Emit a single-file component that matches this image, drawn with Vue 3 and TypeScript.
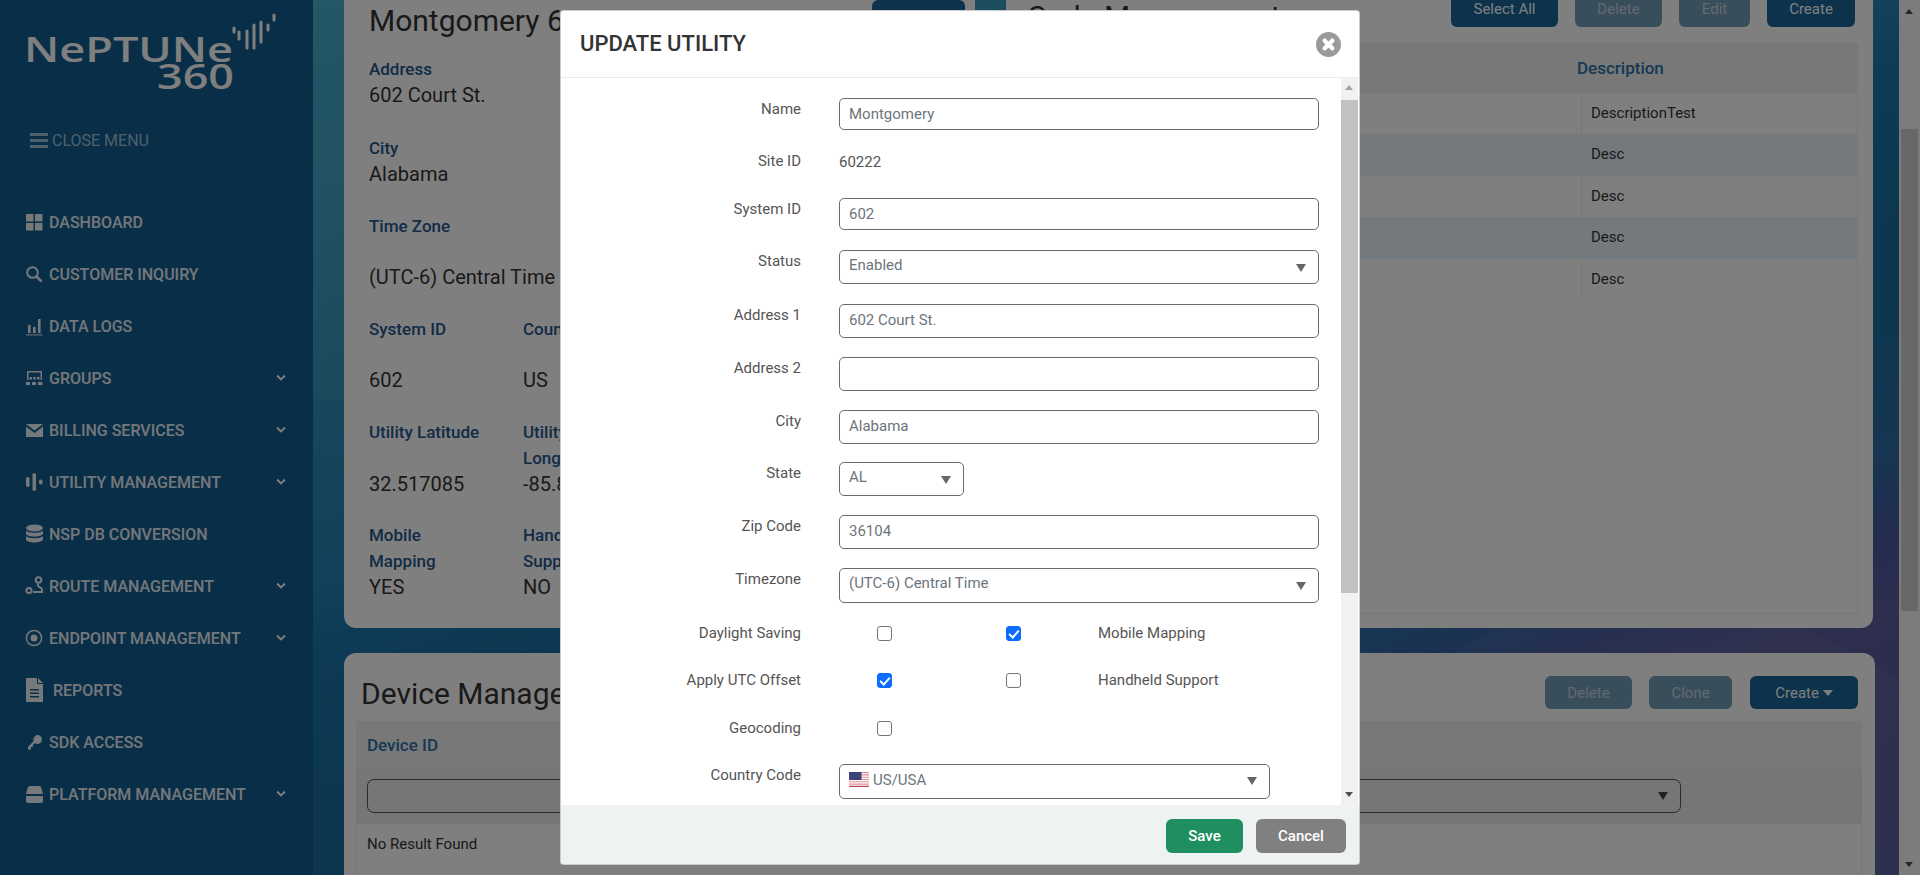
<script setup lang="ts">
const nav = [
  { label: 'DASHBOARD', icon: 'dash', more: false },
  { label: 'CUSTOMER INQUIRY', icon: 'search', more: false },
  { label: 'DATA LOGS', icon: 'chart', more: false },
  { label: 'GROUPS', icon: 'groups', more: true },
  { label: 'BILLING SERVICES', icon: 'mail', more: true },
  { label: 'UTILITY MANAGEMENT', icon: 'util', more: true },
  { label: 'NSP DB CONVERSION', icon: 'db', more: false },
  { label: 'ROUTE MANAGEMENT', icon: 'route', more: true },
  { label: 'ENDPOINT MANAGEMENT', icon: 'endpoint', more: true },
  { label: 'REPORTS', icon: 'report', more: false },
  { label: 'SDK ACCESS', icon: 'key', more: false },
  { label: 'PLATFORM MANAGEMENT', icon: 'drive', more: true },
]
const descs = ['DescriptionTest', 'Desc', 'Desc', 'Desc', 'Desc']
</script>

<template>
  <div class="page">
    <aside class="sidebar">
      <svg class="logo" width="290" height="80" viewBox="0 0 290 80">
        <text x="24" y="48" class="logo-word" textLength="209" lengthAdjust="spacingAndGlyphs">NePTUNe</text>
        <text x="157" y="75" class="logo-num" textLength="77" lengthAdjust="spacingAndGlyphs">360</text>
        <path class="logo-dots" d="M234 14v4M239 18v7M247 17v17M254 11v17M254 29v5M261 8v20M268 11v5M274 1v5" />
      </svg>
      <div class="close-menu">
        <svg width="18" height="15" viewBox="0 0 18 15"><rect width="18" height="3" /><rect y="6" width="18" height="3" /><rect y="12" width="18" height="3" /></svg>
        <span>CLOSE MENU</span>
      </div>
      <nav class="nav">
        <div v-for="item in nav" :key="item.label" class="nav-item" :class="{ 'is-report': item.icon === 'report' }">
          <svg class="nav-icon" width="18" height="24" viewBox="0 0 18 24" fill="#fff">
            <g v-if="item.icon === 'dash'"><rect x="1" y="4" width="7.500" height="7.500" /><rect x="10" y="4" width="7.500" height="7.500" /><rect x="1" y="13" width="7.500" height="7.500" /><rect x="10" y="13" width="7.500" height="7.500" /></g>
            <g v-else-if="item.icon === 'search'" fill="none" stroke="#fff"><circle cx="7.500" cy="10.500" r="5.300" stroke-width="2" /><path d="M11.500 14.500l5 5" stroke-width="2.600" /></g>
            <g v-else-if="item.icon === 'chart'"><rect x="3" y="11" width="2.600" height="8" /><rect x="8" y="13" width="2.600" height="6" /><rect x="13" y="5" width="2.600" height="14" /><rect x="1" y="20.400" width="16.500" height="1" /></g>
            <g v-else-if="item.icon === 'groups'"><path d="M2 5h15v9h-1.500V6.500h-12V14H2z" /><rect x="4.500" y="11" width="2.500" height="2.500" /><rect x="8.200" y="11" width="2.500" height="2.500" /><rect x="12" y="11" width="2.500" height="2.500" /><rect x="1" y="16" width="4" height="3" /><rect x="7" y="16" width="4" height="3" /><rect x="13" y="16" width="4.500" height="3" /></g>
            <path v-else-if="item.icon === 'mail'" d="M1 6h17L9.500 12.500zM1 8.500v10.500h17V8.500l-8.500 6.500z" />
            <g v-else-if="item.icon === 'util'"><rect x="1" y="7" width="3.500" height="10" rx="1.700" /><rect x="7.500" y="3" width="3.500" height="18" rx="1.700" /><rect x="14" y="9.500" width="3.500" height="5" rx="1.700" /></g>
            <g v-else-if="item.icon === 'db'"><ellipse cx="9.500" cy="6" rx="8.500" ry="3.500" /><path d="M1 8.500c2 3 15 3 17 0v3.500c-2 3.500-15 3.500-17 0zM1 14c2 3 15 3 17 0v3.500c-1 4-16 4-17 0z" /></g>
            <g v-else-if="item.icon === 'route'" fill="none" stroke="#fff" stroke-width="2"><circle cx="13.500" cy="6" r="2.800" /><circle cx="4" cy="16.500" r="2.600" /><path d="M13 9.500v2c0 2 4 1.500 4 4v2.500h-9" /></g>
            <g v-else-if="item.icon === 'endpoint'"><circle cx="9" cy="12" r="7.600" fill="none" stroke="#fff" stroke-width="1.500" /><circle cx="9" cy="12" r="3.500" /></g>
            <g v-else-if="item.icon === 'report'"><path d="M1 0h11v6h6v18H1z" /><path d="M13 0l5 5h-5z" /><rect x="5" y="11" width="9" height="1.500" fill="#125c90" /><rect x="5" y="14.500" width="9" height="1.500" fill="#125c90" /><rect x="5" y="18" width="9" height="1.500" fill="#125c90" /></g>
            <path v-else-if="item.icon === 'key'" d="M12.500 5a4.500 4.500 0 0 1 1.200 8.800c-1.400.4-2.700.1-3.600-.7L8 15v2H6v2.500H3v-2.800l5.500-5.500C7.800 8 10 5 12.500 5z" />
            <path v-else-if="item.icon === 'drive'" d="M5 4h9c1.500 0 2 1 2.500 2.500L18 12H1l1.500-5.500C3 5 3.500 4 5 4zM1 14h17v5c0 1-1 2-2 2H3c-1 0-2-1-2-2z" />
          </svg>
          <span class="nav-label">{{ item.label }}</span>
          <svg v-if="item.more" class="chev" width="12" height="8" viewBox="0 0 12 8" fill="none" stroke="#fff" stroke-width="1.800"><path d="M2 1.500l4 4 4-4" /></svg>
        </div>
      </nav>
    </aside>

    <main class="main">
      <svg class="shapes" width="1586" height="875" viewBox="0 0 1586 875">
        <path d="M0 118L31 130V400L0 400z" fill="#fff" opacity=".04" />
        <path d="M1145 652L1182 627H1489L1586 678V875H1050z" fill="#fff" opacity=".04" />
      </svg>
      <div class="content">
        <div class="top-row">
          <section class="card site-card">
            <div class="site-head">
              <h1 class="heading">Montgomery 602</h1>
              <button class="btn primary">Edit</button>
            </div>
            <div class="field"><div class="flabel">Address</div><div class="fvalue">602 Court St.</div></div>
            <div class="field city"><div class="flabel">City</div><div class="fvalue">Alabama</div></div>
            <div class="field tz"><div class="flabel">Time Zone</div><div class="fvalue spaced">(UTC-6) Central Time</div></div>
            <div class="pair sys">
              <div class="flabel">System ID</div><div class="flabel">Country</div>
              <div class="fvalue">602</div><div class="fvalue">US</div>
            </div>
            <div class="pair">
              <div class="flabel">Utility Latitude</div><div class="flabel">Utility<br />Longitude</div>
              <div class="fvalue">32.517085</div><div class="fvalue">-85.8</div>
            </div>
            <div class="pair last">
              <div class="flabel">Mobile<br />Mapping</div><div class="flabel">Handheld<br />Support</div>
              <div class="fvalue">YES</div><div class="fvalue">NO</div>
            </div>
          </section>

          <section class="card code-card">
            <div class="code-head">
              <h1 class="heading">Code Management</h1>
              <div class="btns">
                <button class="btn primary w107">Select All</button>
                <button class="btn muted w87">Delete</button>
                <button class="btn muted w71">Edit</button>
                <button class="btn primary w88">Create</button>
              </div>
            </div>
            <div class="code-table">
              <div class="ct-head"><span>Code</span><span class="ct-desc">Description</span></div>
              <div v-for="(d, i) in descs" :key="i" class="ct-row" :class="{ odd: i % 2 === 1 }">
                <span></span><span class="ct-cell">{{ d }}</span>
              </div>
            </div>
          </section>
        </div>

        <section class="card device-card">
          <div class="device-head">
            <h1 class="heading">Device Management</h1>
            <div class="btns dbtns">
              <button class="btn muted d-del">Delete</button>
              <button class="btn muted d-clone">Clone</button>
              <button class="btn primary d-create">Create <i class="caret"></i></button>
            </div>
          </div>
          <div class="dtable">
            <div class="dt-head">Device ID</div>
            <div class="dt-filter">
              <div class="dt-select"><i class="arrow dark"></i></div>
            </div>
            <div class="dt-empty">No Result Found</div>
          </div>
        </section>
      </div>
    </main>

    <div class="page-scroll">
      <i class="sb-up"></i>
      <div class="sb-thumb"></div>
      <i class="sb-down"></i>
    </div>

    <div class="backdrop"></div>

    <div class="modal">
      <header class="m-head">
        <h2>UPDATE UTILITY</h2>
        <svg class="m-close" width="25" height="25" viewBox="0 0 25 25"><circle cx="12.500" cy="12.500" r="12.500" fill="#9a9a9a" /><path d="M8.700 8.700l7.600 7.600M16.300 8.700l-7.600 7.600" stroke="#fff" stroke-width="4.400" stroke-linecap="round" /></svg>
      </header>
      <div class="m-body">
        <div class="form">
          <div class="row r1"><label>Name</label><div class="ctl">Montgomery</div></div>
          <div class="row r2"><label>Site ID</label><div class="static">60222</div></div>
          <div class="row r3"><label>System ID</label><div class="ctl">602</div></div>
          <div class="row r4"><label>Status</label><div class="ctl sel">Enabled<i class="arrow"></i></div></div>
          <div class="row r5"><label>Address 1</label><div class="ctl tall">602 Court St.</div></div>
          <div class="row r5"><label>Address 2</label><div class="ctl tall"></div></div>
          <div class="row r5"><label>City</label><div class="ctl tall">Alabama</div></div>
          <div class="row r5"><label>State</label><div class="ctl sel state">AL<i class="arrow"></i></div></div>
          <div class="row r5"><label>Zip Code</label><div class="ctl tall">36104</div></div>
          <div class="row r6"><label>Timezone</label><div class="ctl sel">(UTC-6) Central Time<i class="arrow"></i></div></div>
          <div class="row chk"><label>Daylight Saving</label><span class="box"></span><span class="box on c2"></span><span class="chk-text">Mobile Mapping</span></div>
          <div class="row chk"><label>Apply UTC Offset</label><span class="box on"></span><span class="box c2"></span><span class="chk-text">Handheld Support</span></div>
          <div class="row chk geo"><label>Geocoding</label><span class="box"></span></div>
          <div class="row"><label>Country Code</label>
            <div class="ctl sel country">
              <svg class="flag" width="20" height="15" viewBox="0 0 20 15">
                <rect width="20" height="15" fill="#fff" />
                <path d="M0 .6h20M0 2.900h20M0 5.200h20M0 7.500h20M0 9.800h20M0 12.100h20" stroke="#e08a94" stroke-width="1.100" />
                <path d="M0 14.400h20" stroke="#b8404e" stroke-width="1.200" />
                <rect width="12.500" height="8" fill="#3d4478" />
              </svg>
              US/USA<i class="arrow"></i>
            </div>
          </div>
        </div>
        <div class="m-scroll">
          <i class="m-up"></i>
          <div class="m-thumb"></div>
          <i class="m-down"></i>
        </div>
      </div>
      <footer class="m-foot">
        <button class="fbtn save">Save</button>
        <button class="fbtn cancel">Cancel</button>
      </footer>
    </div>
  </div>
</template>

<style>
html, body { margin: 0; overflow: hidden; }
</style>

<style scoped>
.page { position: relative; display: flex; width: 1920px; height: 875px; overflow: hidden; font-family: Roboto, "Liberation Sans", sans-serif; color: #333; }
.sidebar { width: 313px; flex: none; background: #125c90; color: #fff; position: relative; }
.logo { display: block; margin-top: 14px; overflow: visible; width: 290px; height: 80px; }
.logo-word, .logo-num { font-family: "Open Sans", Roboto, sans-serif; font-size: 35px; font-weight: 600; fill: #fff; }
.logo-dots { fill: none; stroke: #fff; stroke-width: 3; stroke-linecap: round; }
.close-menu { display: flex; align-items: center; gap: 4px; margin: 34px 0 0 30px; height: 24px; font-size: 16px; color: #9cc2da; }
.close-menu svg { fill: #9cc2da; }
.nav { margin-top: 44px; }
.nav-item { display: flex; align-items: center; height: 52px; padding-left: 25px; font-size: 16px; font-weight: 500; color: #e8eff4; }
.nav-icon { flex: none; margin-right: 6px; opacity: .92; }
.is-report .nav-label { margin-left: 4px; }
.chev { margin-left: auto; margin-right: 26px; }

.main { flex: 1; min-width: 0; position: relative; background: linear-gradient(160deg, #48b0cc 0%, #2c8cb8 30%, #2680b4 40%, #1a74aa 45%, #1a6c9e 60%, #2c6ca4 70%, #465aa0 76%, #5c5c9c 81%, #545a98 100%); }
.shapes { position: absolute; left: 0; top: 0; }
.content { position: relative; margin-top: -41px; padding: 0 0 0 31px; width: 1531px; }
.top-row { display: flex; gap: 31px; width: 1529px; }
.card { background: #fff; border-radius: 12px; }
.heading { margin: 0; font-size: 30px; font-weight: 400; line-height: 36px; color: #333; white-space: nowrap; }
.site-card { width: 631px; flex: none; padding: 44px 25px 25px; box-sizing: border-box; height: 669px; }
.site-head { display: flex; justify-content: space-between; height: 53px; }
.site-head .btn { width: 93px; margin-right: -15px; margin-top: -3px; }
.field { margin-bottom: 26px; }
.city { margin-top: 27px; }
.tz .spaced { margin-top: 25px; }
.flabel { font-size: 17px; font-weight: 500; line-height: 26px; color: #24568c; }
.fvalue { font-size: 20px; line-height: 26px; color: #333; }
.pair { display: grid; grid-template-columns: 154px 154px; margin-bottom: 26px; }
.sys { row-gap: 25px; margin-top: 2px; }
.last { margin-top: 2px; }
.last .flabel { line-height: 25.500px; }
.code-card { flex: 1; min-width: 0; position: relative; padding: 0 15px 13px; box-sizing: border-box; height: 669px; }
.code-head { display: flex; justify-content: space-between; align-items: flex-start; padding-top: 32px; height: 84px; box-sizing: border-box; padding-right: 3px; }
.code-head .heading { margin: 8px 0 0 6px; }
.btns { display: flex; }
.btn { height: 36px; border: 0; border-radius: 6px; font: 400 15px Roboto, sans-serif; color: #fff; padding: 0; }
.primary { background: #186499; }
.muted { background: #709cb6; color: #c6d4de; }
.w107 { width: 107px; margin-right: 17px; }
.w87 { width: 87px; margin-right: 17px; }
.w71 { width: 71px; margin-right: 17px; }
.w88 { width: 88px; }
.code-table { border: 1px solid #eee; height: 571px; box-sizing: border-box; }
.ct-head { display: grid; grid-template-columns: 559px 1fr; height: 48.500px; background: #f0f0f0; align-items: center; font-size: 17px; font-weight: 500; color: #2a70a8; }
.ct-desc { margin-left: -4px; }
.ct-row { display: grid; grid-template-columns: 559px 1fr; height: 41.500px; align-items: center; font-size: 15px; }
.ct-row.odd { background: #e6f2fa; }
.ct-cell { padding-left: 9px; border-left: 1px solid #eee; line-height: 41.500px; }

.device-card { width: 1531px; margin-top: 25px; padding: 0 12px; box-sizing: border-box; height: 400px; }
.device-head { display: flex; justify-content: space-between; height: 68px; position: relative; padding: 23px 6px 0 5px; box-sizing: border-box; }
.dbtns { margin-right: -1px; }
.d-del { width: 87px; margin-right: 17px; height: 33px; }
.d-clone { width: 83px; margin-right: 18px; height: 33px; }
.d-create { width: 108px; height: 33px; }
.caret { display: inline-block; width: 0; height: 0; border: 5px solid transparent; border-top: 6px solid #fff; border-bottom: 0; vertical-align: 2px; }
.dtable { width: 1506px; }
.dt-head { height: 48px; background: #f0f0f0; line-height: 48px; padding-left: 11px; box-sizing: border-box; font-size: 17px; font-weight: 500; color: #2a70a8; }
.dt-filter { height: 54px; background: #ececec; padding: 10px 0 0 11px; box-sizing: border-box; }
.dt-select { position: relative; width: 1314px; height: 34px; border: 1px solid #555; border-radius: 7px; box-sizing: border-box; }
.dt-empty { padding: 10px 10px; font-size: 15px; line-height: 20px; color: #333; border: 1px solid #f0f0f0; height: 200px; }

.page-scroll { width: 21px; flex: none; background: #f8f8f8; position: relative; }
.sb-up, .sb-down, .m-up, .m-down { position: absolute; width: 0; height: 0; border-left: 4.500px solid transparent; border-right: 4.500px solid transparent; }
.sb-up { border-bottom: 5px solid #505050; left: 6px; top: 9px; }
.sb-down { border-top: 5px solid #505050; left: 6px; bottom: 8px; }
.sb-thumb { position: absolute; left: 2px; right: 2px; top: 129px; height: 482px; background: #d0d0d0; }

.backdrop { position: absolute; inset: 0; background: rgba(0, 0, 0, .5); }

.modal { position: absolute; left: 560px; top: 10px; width: 800px; height: 855px; background: #fff; border: 1px solid rgba(0, 0, 0, .2); box-sizing: border-box; border-radius: 4px; display: flex; flex-direction: column; overflow: hidden; }
.m-head { height: 67px; flex: none; display: flex; align-items: center; justify-content: space-between; padding: 0 18px 2px 19px; border-bottom: 1px solid #e9ecef; box-sizing: border-box; }
.m-head h2 { margin: 0; font-size: 22px; font-weight: 500; color: #333; }
.m-close { margin-top: 2px; }
.m-body { flex: 1; min-height: 0; display: flex; overflow: hidden; }
.form { flex: 1; min-width: 0; padding-top: 20px; color: #555; font-size: 15px; }
.m-scroll { width: 17px; flex: none; position: relative; background: #f1f1f1; margin-right: 1px; }
.m-up { border-bottom: 5px solid #a3a3a3; left: 4px; top: 7px; }
.m-down { border-top: 5px solid #505050; left: 4px; bottom: 8px; }
.m-thumb { position: absolute; left: 0; right: 0; top: 22px; height: 493px; background: #c1c1c1; }
.row { display: flex; align-items: flex-start; }
.row label { width: 240px; text-align: right; margin-right: 38px; padding-top: 3px; line-height: 17px; color: #555; flex: none; }
.ctl { width: 480px; height: 32px; box-sizing: border-box; border: 1px solid #6b6b6b; border-radius: 5px; padding: 0 9px; line-height: 31px; color: #6c757d; position: relative; }
.ctl.tall { height: 34px; line-height: 31px; }
.static { line-height: 20px; padding-top: 4px; }
.r1 { height: 50px; }
.r2 { height: 50px; }
.r2 label { padding-top: 5px; }
.r3 { height: 52px; }
.r4 { height: 54px; }
.sel { height: 34px; line-height: 29px; }
.r5 { height: 52.800px; }
.r6 { height: 56px; }
.r6 .sel { height: 35px; }
.state { width: 125px; }
.country { width: 431px; height: 35px; display: flex; align-items: center; line-height: 20px; padding-bottom: 3px; }
.flag { margin-right: 4px; flex: none; }
.arrow { position: absolute; right: 12px; top: 13px; width: 0; height: 0; border-left: 5px solid transparent; border-right: 5px solid transparent; border-top: 8px solid #666; }
.country .arrow { top: 12px; }
.arrow.dark { border-top-color: #444; top: 12px; }
.chk { height: 47.500px; position: relative; }
.row.chk label { padding-top: 0; margin-top: 1px; }
.box { position: absolute; left: 316px; top: 2px; width: 15px; height: 15px; box-sizing: border-box; border: 1px solid #767676; border-radius: 3px; background: #fff; }
.box.c2 { left: 445px; }
.box.on { background: #0b6dff; border-color: #0b6dff; }
.box.on::after { content: ""; position: absolute; left: 4px; top: 1px; width: 4px; height: 8px; border: solid #fff; border-width: 0 2.500px 2.500px 0; transform: rotate(42deg); }
.chk-text { position: absolute; left: 537px; top: 1px; line-height: 17px; color: #555; }
.geo { height: 45px; }
.m-foot { height: 59px; flex: none; background: #eff2f3; display: flex; justify-content: flex-end; align-items: flex-start; padding: 14px 13px 0 0; box-sizing: border-box; gap: 13px; }
.fbtn { height: 34px; border: 0; border-radius: 6px; font: 500 15px Roboto, sans-serif; color: #fff; padding: 0; }
.save { width: 77px; background: #1f8f5f; }
.cancel { width: 90px; background: #808080; }
</style>
